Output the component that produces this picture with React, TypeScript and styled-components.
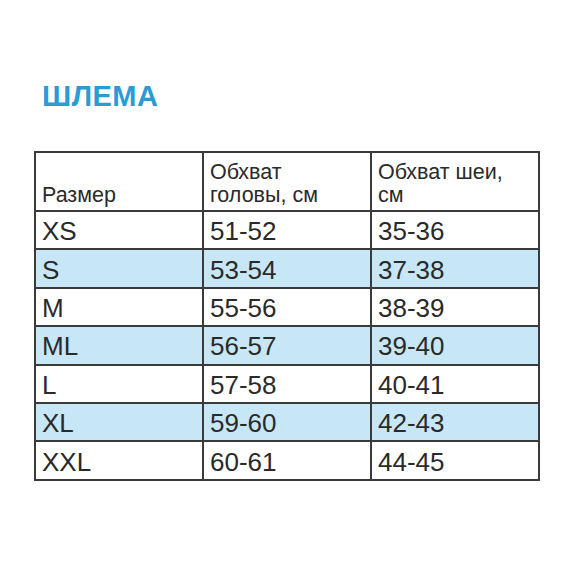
import React from 'react';
import styled, { createGlobalStyle } from 'styled-components';

const GlobalStyle = createGlobalStyle`
  html, body {
    margin: 0;
    padding: 0;
    background: #ffffff;
    font-family: 'Liberation Sans', Arial, sans-serif;
  }
`;

const Page = styled.div`
  width: 570px;
  height: 570px;
  box-sizing: border-box;
  padding: 80px 30px 0 34px;
`;

const Title = styled.h1`
  margin: 0 0 39px 8px;
  font-size: 29px;
  line-height: 32px;
  font-weight: 700;
  color: #2b9bd3;
  letter-spacing: 0.5px;
`;

const Table = styled.table`
  width: 506px;
  border-collapse: collapse;
  border: 2px solid #3a3a3a;
  color: #2a2a2a;
`;

const Row = styled.tr<{ $shaded?: boolean }>`
  height: 38.4px;
  background: ${(p) => (p.$shaded ? '#c8e7f6' : '#ffffff')};
`;

const HeadCell = styled.th`
  width: 33.3%;
  height: 54px;
  border: 2px solid #3a3a3a;
  padding: 0 4px 3px 6px;
  text-align: left;
  vertical-align: bottom;
  font-weight: 400;
  font-size: 21.5px;
  line-height: 23px;
  white-space: nowrap;
`;

const Cell = styled.td`
  border: 2px solid #3a3a3a;
  padding: 2px 6px 0;
  font-size: 26px;
  line-height: 30px;
  vertical-align: middle;
`;

const rows = [
  ['XS', '51-52', '35-36'],
  ['S', '53-54', '37-38'],
  ['M', '55-56', '38-39'],
  ['ML', '56-57', '39-40'],
  ['L', '57-58', '40-41'],
  ['XL', '59-60', '42-43'],
  ['XXL', '60-61', '44-45'],
];

function App() {
  return (
    <Page>
      <GlobalStyle />
      <Title>ШЛЕМА</Title>
      <Table>
        <thead>
          <tr>
            <HeadCell>Размер</HeadCell>
            <HeadCell>
              Обхват
              <br />
              головы, см
            </HeadCell>
            <HeadCell>
              Обхват шеи,
              <br />
              см
            </HeadCell>
          </tr>
        </thead>
        <tbody>
          {rows.map((r, i) => (
            <Row key={r[0]} $shaded={i % 2 === 1}>
              {r.map((c) => (
                <Cell key={c}>{c}</Cell>
              ))}
            </Row>
          ))}
        </tbody>
      </Table>
    </Page>
  );
}

export default App;
